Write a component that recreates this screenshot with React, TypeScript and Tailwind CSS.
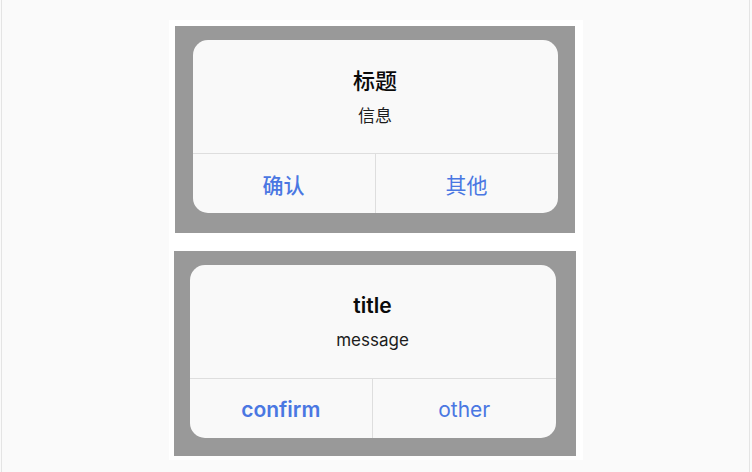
import React from 'react';

interface AlertProps {
  title: string;
  message: string;
  confirm: string;
  other: string;
  cjk?: boolean;
  frame: string;
  inset: string;
}

const latin = "font-['Inter','Noto_Sans','Liberation_Sans',sans-serif]";
const chinese = "font-['Noto_Sans_CJK_SC','Noto_Sans',sans-serif]";

function AlertShot({ title, message, confirm, other, cjk, frame, inset }: AlertProps) {
  const font = cjk ? chinese : latin;
  const strong = cjk ? 'font-medium' : 'font-semibold';
  return (
    <div className={`bg-[#999999] ${frame}`}>
      <div className={`flex flex-col overflow-hidden rounded-[15px] bg-[#f9f9f9] ${inset} ${font}`}>
        <div className={`flex h-[113px] flex-col items-center ${cjk ? 'pt-[26px]' : 'pt-[28px]'}`}>
          <div
            className={`leading-[26px] text-[#0a0a0a] ${strong} ${
              cjk ? 'text-[22px]' : 'text-[21px]'
            }`}
          >
            {title}
          </div>
          <div
            className={`text-[17px] leading-[22px] text-[#1c1c1c] ${
              cjk ? 'mt-[12px]' : 'mt-[10px]'
            }`}
          >
            {message}
          </div>
        </div>
        <div className="flex h-[60px] border-t border-[#dedede]">
          <button
            className={`flex flex-1 items-center justify-center pt-[3px] text-[21px] text-[#4a77e2] ${strong}`}
          >
            {confirm}
          </button>
          <div className="w-px bg-[#dedede]" />
          <button className="flex flex-1 items-center justify-center pt-[3px] text-[21px] text-[#4a77e2]">
            {other}
          </button>
        </div>
      </div>
    </div>
  );
}

export default function App() {
  return (
    <div className="h-[472px] w-[752px] bg-[#fafafa] pl-px pr-[2px]">
      <div className="flex h-full justify-center border-x border-[#e4e4e4] pt-[20px]">
        <div className="flex h-[440px] w-[414px] flex-col bg-white px-[6px] pt-[6px]">
          <AlertShot
            title="标题"
            message="信息"
            confirm="确认"
            other="其他"
            cjk
            frame="h-[207px] w-[400px] pt-[14px] pl-[18px] pr-[17px]"
            inset="h-[173px]"
          />
          <div className="h-[18px]" />
          <AlertShot
            title="title"
            message="message"
            confirm="confirm"
            other="other"
            frame="-ml-px h-[205px] w-[402px] pt-[14px] pl-[16px] pr-[20px]"
            inset="h-[173px]"
          />
        </div>
      </div>
    </div>
  );
}
